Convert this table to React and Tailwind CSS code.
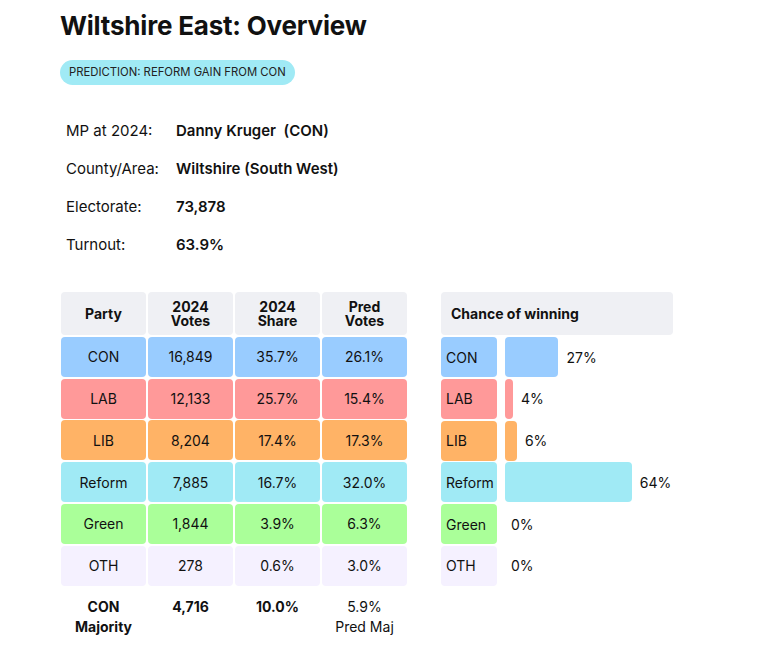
const rows = [
  { party: "CON", votes: "16,849", share: "35.7%", pred: "26.1%", chance: 27, bg: "bg-[#99ccff]" },
  { party: "LAB", votes: "12,133", share: "25.7%", pred: "15.4%", chance: 4, bg: "bg-[#ff9999]" },
  { party: "LIB", votes: "8,204", share: "17.4%", pred: "17.3%", chance: 6, bg: "bg-[#ffb366]" },
  { party: "Reform", votes: "7,885", share: "16.7%", pred: "32.0%", chance: 64, bg: "bg-[#a0eaf5]" },
  { party: "Green", votes: "1,844", share: "3.9%", pred: "6.3%", chance: 0, bg: "bg-[#aaff99]" },
  { party: "OTH", votes: "278", share: "0.6%", pred: "3.0%", chance: 0, bg: "bg-[#f5f1ff]" },
];

const info = [
  ["MP at 2024:", "Danny Kruger  (CON)"],
  ["County/Area:", "Wiltshire (South West)"],
  ["Electorate:", "73,878"],
  ["Turnout:", "63.9%"],
];

const App = () => {
  return (
    <div className="min-h-[650px] bg-white text-[#111] pl-[60px] pt-[8px] font-['Inter',sans-serif]">
      <h1 className="text-[26px] font-bold leading-[36px] tracking-[-0.2px]">Wiltshire East: Overview</h1>
      <div className="mt-[16px] inline-flex h-[25px] items-center rounded-full bg-[#a0eaf5] px-[9px] text-[11.3px] text-[#222]">
        PREDICTION: REFORM GAIN FROM CON
      </div>

      <div className="mt-[35px] ml-[6px] flex flex-col gap-[16px] text-[15px]">
        {info.map(([k, v]) => (
          <div key={k} className="flex h-[22px] items-center">
            <div className="w-[110px]">{k}</div>
            <div className="font-semibold whitespace-pre">{v}</div>
          </div>
        ))}
      </div>

      <div className="mt-[36px] flex items-start">
        <div className="ml-[1px]">
          <div className="grid grid-cols-[85px_85px_85px_85px] gap-x-[2px] gap-y-[1.8px] text-[14px]">
            {["Party", "2024\nVotes", "2024\nShare", "Pred\nVotes"].map((h) => (
              <div key={h} className="flex h-[43px] items-center justify-center rounded-[4px] bg-[#eff0f4] text-center font-bold leading-[14px] whitespace-pre-line">
                {h}
              </div>
            ))}
            {rows.map((r) =>
              [r.party, r.votes, r.share, r.pred].map((c, i) => (
                <div key={r.party + i} className={`flex h-[40px] items-center justify-center rounded-[4px] ${r.bg}`}>
                  {c}
                </div>
              ))
            )}
            <div className="pt-[9px] text-center font-bold leading-[20px]">CON<br />Majority</div>
            <div className="pt-[9px] text-center font-bold leading-[20px]">4,716</div>
            <div className="pt-[9px] text-center font-bold leading-[20px]">10.0%</div>
            <div className="pt-[9px] text-center leading-[20px]">5.9%<br />Pred Maj</div>
          </div>
        </div>

        <div className="ml-[34px] w-[232px] text-[14px]">
          <div className="flex h-[43px] items-center rounded-[4px] bg-[#eff0f4] pl-[10px] font-bold">Chance of winning</div>
          <div className="mt-[2px] flex flex-col gap-[1.8px]">
            {rows.map((r) => (
              <div key={r.party} className="flex h-[40px] items-center">
                <div className={`flex h-[40px] w-[56px] items-center rounded-[4px] pl-[5px] ${r.bg}`}>{r.party}</div>
                <div
                  className={`ml-[8px] h-[40px] rounded-[4px] ${r.bg}`}
                  style={{ width: `${r.chance * 1.98}px` }}
                />
                <div className={r.chance > 0 ? "ml-[8px]" : "ml-[6px]"}>{r.chance}%</div>
              </div>
            ))}
          </div>
        </div>
      </div>
    </div>
  );
};

export default App;
